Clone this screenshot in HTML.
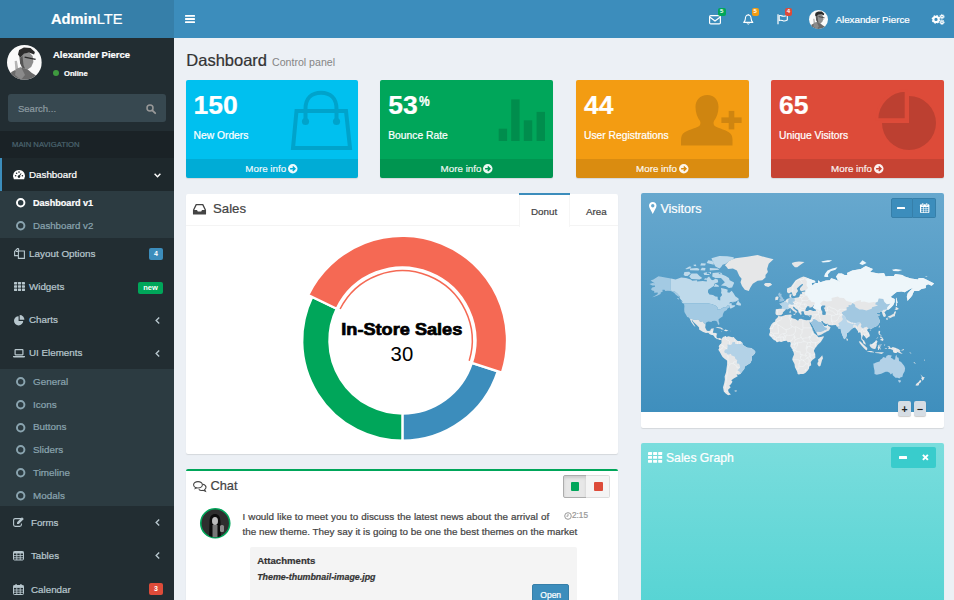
<!DOCTYPE html>
<html lang="en">
<head>
<meta charset="utf-8">
<title>AdminLTE | Dashboard</title>
<style>
*{box-sizing:border-box;margin:0;padding:0}
html,body{width:954px;height:600px;overflow:hidden}
body{font-family:"Liberation Sans",sans-serif;font-size:10.5px;color:#333;background:#ecf0f5;position:relative}
.abs{position:absolute}
.t{position:absolute;white-space:nowrap;line-height:1;-webkit-text-stroke:.22px currentColor}
svg{display:block;overflow:visible}
/* header */
#logo{left:0;top:0;width:173.5px;height:38px;background:#367fa9;color:#fff;text-align:center;font-size:14.7px;line-height:39.6px;-webkit-text-stroke:.2px #fff}
#logo b{font-weight:700}
#navbar{left:173.5px;top:0;width:780.5px;height:38px;background:#3c8dbc}
/* sidebar */
#sidebar{left:0;top:38px;width:173.5px;height:562px;background:#222d32}
.nav{position:absolute;left:0;width:173.5px;height:33.3px;color:#b8c7ce}

.sub{position:absolute;left:0;width:173.5px;background:#2c3b41}
.sub .t{left:33px;font-size:9.9px;color:#8aa4af}
.ring{position:absolute;left:15.8px;width:9.4px;height:9.4px}
.badge{position:absolute;border-radius:2px;color:#fff;font-weight:700;font-size:7px;text-align:center}
/* small boxes */
.sbox{position:absolute;top:80px;width:172px;height:98px;border-radius:2px;color:#fff;overflow:hidden;box-shadow:0 1px 1px rgba(0,0,0,.1)}
.sbox .num{left:8px;top:11.8px;font-size:26.5px;font-weight:700}
.sbox .lbl{left:8px;top:50.5px;font-size:10.3px}
.sbox .foot{-webkit-text-stroke:.22px currentColor;position:absolute;left:0;bottom:0;width:100%;height:19.5px;background:rgba(0,0,0,.1);text-align:center;font-size:9.8px;line-height:20px;color:rgba(255,255,255,.9)}
.zb{width:12.5px;height:14.5px;background:#d6dde4;color:#222;border-radius:2px;font-size:10.5px;line-height:17px;text-align:center;font-weight:700;box-shadow:0 1px 1px rgba(0,0,0,.2)}
.box{position:absolute;background:#fff;border-radius:2px;box-shadow:0 1px 1px rgba(0,0,0,.1)}
</style>
</head>
<body>

<!-- HEADER -->
<div id="logo" class="abs"><b>Admin</b>LTE</div>
<div id="navbar" class="abs">
  <!-- hamburger -->
  <svg class="abs" style="left:11.5px;top:15px" width="10" height="8" viewBox="0 0 10 8"><rect x="0" y="0" width="10" height="1.8" rx=".6" fill="#fff"/><rect x="0" y="3.1" width="10" height="1.8" rx=".6" fill="#fff"/><rect x="0" y="6.2" width="10" height="1.8" rx=".6" fill="#fff"/></svg>
  <!-- envelope -->
  <svg class="abs" style="left:535.5px;top:15px" width="12" height="9.5" viewBox="0 0 12 9.5"><rect x=".6" y=".6" width="10.8" height="8.3" rx="1.2" fill="none" stroke="#fff" stroke-width="1.2"/><path d="M1 2.2 L6 6 L11 2.2" fill="none" stroke="#fff" stroke-width="1.2"/></svg>
  <div class="badge" style="left:544.5px;top:8px;width:7.5px;height:7.5px;background:#00a65a;font-size:6px;line-height:7.5px">5</div>
  <!-- bell -->
  <svg class="abs" style="left:569.5px;top:13.5px" width="10.5" height="11" viewBox="0 0 10.5 11"><path d="M5.25 1 C3 1 2.4 3 2.4 4.6 C2.4 6.6 1.6 7.6 .7 8.4 L9.8 8.4 C8.9 7.6 8.1 6.6 8.1 4.6 C8.1 3 7.5 1 5.25 1 Z" fill="none" stroke="#fff" stroke-width="1.1" stroke-linejoin="round"/><path d="M4.2 9.4 A1.1 1.1 0 0 0 6.3 9.4" fill="none" stroke="#fff" stroke-width="1"/><rect x="4.8" y="0" width=".9" height="1.2" fill="#fff"/></svg>
  <div class="badge" style="left:578px;top:8px;width:7.5px;height:7.5px;background:#f39c12;font-size:6px;line-height:7.5px">5</div>
  <!-- flag -->
  <svg class="abs" style="left:603px;top:14px" width="11" height="10.5" viewBox="0 0 11 10.5"><path d="M1 .3 L1 10.3" stroke="#fff" stroke-width="1.2" fill="none"/><path d="M2.2 1.8 C4 .8 5.2 2.6 7 2.2 C8.4 1.9 9.4 1.4 10.3 1 L10.3 6 C9 6.8 7.8 7.2 6.6 7 C5 6.7 4 5.6 2.2 6.6 Z" fill="none" stroke="#fff" stroke-width="1.1" stroke-linejoin="round"/></svg>
  <div class="badge" style="left:611.5px;top:8px;width:7px;height:7.5px;background:#dd4b39;font-size:6px;line-height:7.5px">4</div>
  <!-- avatar -->
  <svg class="abs" style="left:635.7px;top:9.7px" width="19" height="19" viewBox="0 0 34.8 34.8"><defs><clipPath id="cA"><circle cx="17.4" cy="17.4" r="17.4"/></clipPath></defs><g clip-path="url(#cA)"><rect width="34.8" height="34.8" fill="#fafafa"/><path d="M4.4 27.1 L9.5 24.2 L16.1 22.2 L20.5 24.2 L24.9 27.9 L30.8 31.5 L30 34.8 L5 34.8 L3 31.5Z" fill="#6a6a6a"/><path d="M12.1 11.7 L16.9 8.4 L22 7.3 L25.7 11 L26.4 16.9 L24.2 22 L20.5 24.6 L16.1 23.2 L13.2 18.300Z" fill="#8e8e8e"/><path d="M13.2 13 L15.5 11 L16.5 20 L18 23.5 L15 22.5 L13 18Z" fill="#555"/><path d="M11 9.5 L12.1 5.1 L16.900 2.6 L23.5 2.9 L27.9 7 L27.1 9.5 L22 7.6 L16.900 8.8 L13.2 12.5Z" fill="#2b2b2b"/><path d="M17.6 12.1 L28.6 14.3" stroke="#2a2a2a" stroke-width="1.3" fill="none"/><path d="M7.7 16.100 L9.900 15.800 L11.4 24.2 L8.400 26Z" fill="#b5b5b5"/><path d="M9 24 L14 22 L18 30 L14 34.8 L8 30Z" fill="#8a8a8a"/></g></svg>
  <div class="t" style="left:662px;top:14.6px;font-size:9.75px;color:#fff">Alexander Pierce</div>
  <!-- gears -->
  <svg class="abs" style="left:758.5px;top:14px" width="12.5" height="10.5" viewBox="0 0 12.5 10.5"><circle cx="4" cy="5.4" r="2.6" fill="none" stroke="#fff" stroke-width="2"/><circle cx="4" cy="5.4" r="3.7" fill="none" stroke="#fff" stroke-width="1.3" stroke-dasharray="1.6 1.3"/><circle cx="10" cy="2.6" r="1.3" fill="none" stroke="#fff" stroke-width="1.3"/><circle cx="10" cy="2.6" r="2.2" fill="none" stroke="#fff" stroke-width=".9" stroke-dasharray="1 .73"/><circle cx="10" cy="8.2" r="1.3" fill="none" stroke="#fff" stroke-width="1.3"/><circle cx="10" cy="8.2" r="2.2" fill="none" stroke="#fff" stroke-width=".9" stroke-dasharray="1 .73"/></svg>
</div>

<!-- SIDEBAR -->
<div id="sidebar" class="abs">
<svg class="abs" style="left:7.3px;top:7.1px" width="34.8" height="34.8" viewBox="0 0 34.8 34.8"><defs><clipPath id="cB"><circle cx="17.4" cy="17.4" r="17.4"/></clipPath></defs><g clip-path="url(#cB)"><rect width="34.8" height="34.8" fill="#fafafa"/><path d="M4.4 27.1 L9.5 24.2 L16.1 22.2 L20.5 24.2 L24.9 27.9 L30.8 31.5 L30 34.8 L5 34.8 L3 31.5Z" fill="#6a6a6a"/><path d="M12.1 11.7 L16.9 8.4 L22 7.3 L25.7 11 L26.4 16.9 L24.2 22 L20.5 24.6 L16.1 23.2 L13.2 18.300Z" fill="#8e8e8e"/><path d="M13.2 13 L15.5 11 L16.5 20 L18 23.5 L15 22.5 L13 18Z" fill="#555"/><path d="M11 9.5 L12.1 5.1 L16.900 2.6 L23.5 2.9 L27.9 7 L27.1 9.5 L22 7.6 L16.900 8.8 L13.2 12.5Z" fill="#2b2b2b"/><path d="M17.6 12.1 L28.6 14.3" stroke="#2a2a2a" stroke-width="1.3" fill="none"/><path d="M7.7 16.100 L9.900 15.800 L11.4 24.2 L8.400 26Z" fill="#b5b5b5"/><path d="M9 24 L14 22 L18 30 L14 34.8 L8 30Z" fill="#8a8a8a"/></g></svg>
<div class="t" style="left:53px;top:11.8px;font-size:9.5px;font-weight:700;color:#fff">Alexander Pierce</div>
<div class="abs" style="left:53px;top:32px;width:6.4px;height:6.4px;border-radius:50%;background:#3f9a3f"></div>
<div class="t" style="left:64px;top:31.5px;font-size:7.6px;color:#fff;font-weight:700">Online</div>
<div class="abs" style="left:8px;top:56px;width:158px;height:28px;background:#374850;border-radius:3px"></div>
<div class="t" style="left:18px;top:65.5px;font-size:9.5px;color:#8d9ba1">Search...</div>
<svg class="abs" style="left:145.5px;top:66px" width="10" height="10" viewBox="0 0 10 10"><circle cx="4" cy="4" r="3" fill="none" stroke="#999" stroke-width="1.5"/><path d="M6.3 6.3 L9.2 9.2" stroke="#999" stroke-width="1.8" stroke-linecap="round"/></svg>
<div class="abs" style="left:0;top:93px;width:173.5px;height:27px;background:#1a2226"></div>
<div class="t" style="left:12px;top:102.5px;font-size:7.7px;color:#4b646f">MAIN NAVIGATION</div>
<div class="abs" style="left:0;top:120px;width:173.5px;height:32.5px;background:#1e282c"></div><div class="abs" style="left:0;top:120px;width:2.4px;height:32.5px;background:#3c8dbc"></div>
<svg class="abs" style="left:13px;top:131.5px" width="12" height="9.5" viewBox="0 0 12 9.5"><path d="M6 0 A6 6 0 0 0 .9 9.2 L11.1 9.2 A6 6 0 0 0 6 0Z" fill="#fff"/><circle cx="6" cy="6.6" r="1.3" fill="#1e282c"/><path d="M6 6.6 L8 3.4" stroke="#1e282c" stroke-width="1"/><circle cx="2.6" cy="5.8" r=".8" fill="#1e282c"/><circle cx="3.6" cy="3.2" r=".8" fill="#1e282c"/><circle cx="6" cy="2.1" r=".8" fill="#1e282c"/><circle cx="9.4" cy="5.8" r=".8" fill="#1e282c"/></svg>
<div class="t" style="left:29px;top:131.5px;font-size:9.8px;color:#fff">Dashboard</div>
<svg class="abs" style="left:153.5px;top:134.5px" width="7" height="5" viewBox="0 0 7 5"><path d="M.6 .8 L3.5 3.8 L6.4 .8" fill="none" stroke="#fff" stroke-width="1.4"/></svg>
<div class="sub" style="top:152.5px;height:47px">
<svg class="ring" style="top:7.8px" viewBox="0 0 10 10"><circle cx="5" cy="5" r="3.95" fill="none" stroke="#fff" stroke-width="2.1"/></svg><div class="t" style="top:8.4px;color:#fff;font-weight:700;font-size:9.1px">Dashboard v1</div>
<svg class="ring" style="top:30.3px" viewBox="0 0 10 10"><circle cx="5" cy="5" r="3.95" fill="none" stroke="#8aa4af" stroke-width="2.1"/></svg><div class="t" style="top:30.4px;font-size:9.7px">Dashboard v2</div>
</div>
<svg class="abs" style="left:13.5px;top:209.5px" width="11" height="11" viewBox="0 0 11 11"><path d="M4.6 .6 L4.6 3.4 L1.8 3.4 M4.6 .6 L3.4 .6 L.6 3.4 L.6 7.6 L4 7.6" fill="none" stroke="#b8c7ce" stroke-width="1.1"/><path d="M4.4 3 L10.4 3 L10.4 10.4 L4.4 10.4Z" fill="none" stroke="#b8c7ce" stroke-width="1.1"/></svg><div class="t" style="left:29px;top:210.8px;font-size:9.9px;color:#b8c7ce">Layout Options</div><div class="badge" style="left:149px;top:210px;width:14px;height:12px;background:#3c8dbc;line-height:12px;font-size:7px">4</div>
<svg class="abs" style="left:13.5px;top:244px" width="11" height="9" viewBox="0 0 11 9"><g fill="#b8c7ce"><rect x="0" y="0" width="3.1" height="2.4" rx=".4"/><rect x="3.95" y="0" width="3.1" height="2.4" rx=".4"/><rect x="7.9" y="0" width="3.1" height="2.4" rx=".4"/><rect x="0" y="3.3" width="3.1" height="2.4" rx=".4"/><rect x="3.95" y="3.3" width="3.1" height="2.4" rx=".4"/><rect x="7.9" y="3.3" width="3.1" height="2.4" rx=".4"/><rect x="0" y="6.6" width="3.1" height="2.4" rx=".4"/><rect x="3.95" y="6.6" width="3.1" height="2.4" rx=".4"/><rect x="7.9" y="6.6" width="3.1" height="2.4" rx=".4"/></g></svg><div class="t" style="left:29px;top:243.8px;font-size:9.8px;color:#b8c7ce">Widgets</div><div class="badge" style="left:138px;top:243.5px;width:25px;height:12px;background:#00a65a;line-height:11px;font-size:7.5px">new</div>
<svg class="abs" style="left:13.5px;top:276.5px" width="11" height="10.5" viewBox="0 0 11 10.5"><path d="M4.6 1.2 A4.6 4.6 0 1 0 9.2 5.9 L4.6 5.9Z" fill="#b8c7ce"/><path d="M5.7 0 A4.7 4.7 0 0 1 10.4 4.7 L5.7 4.7Z" fill="#b8c7ce"/></svg><div class="t" style="left:29px;top:276.9px;font-size:9.8px;color:#b8c7ce">Charts</div><svg class="abs" style="left:154.5px;top:278.5px" width="5" height="7" viewBox="0 0 5 7"><path d="M4.2 .6 L1.2 3.5 L4.2 6.4" fill="none" stroke="#b8c7ce" stroke-width="1.4"/></svg>
<svg class="abs" style="left:13px;top:311px" width="12" height="8.5" viewBox="0 0 12 8.5"><rect x="2.1" y=".6" width="7.8" height="5.2" rx=".5" fill="none" stroke="#b8c7ce" stroke-width="1.2"/><path d="M0 7 L12 7 L12 7.4 Q12 8.4 11 8.4 L1 8.4 Q0 8.4 0 7.4Z" fill="#b8c7ce"/></svg><div class="t" style="left:29px;top:310.3px;font-size:9.8px;color:#b8c7ce">UI Elements</div><svg class="abs" style="left:154.5px;top:311.5px" width="5" height="7" viewBox="0 0 5 7"><path d="M4.2 .6 L1.2 3.5 L4.2 6.4" fill="none" stroke="#b8c7ce" stroke-width="1.4"/></svg>
<div class="sub" style="top:331px;height:137px">
<svg class="ring" style="top:8.1px" viewBox="0 0 10 10"><circle cx="5" cy="5" r="3.95" fill="none" stroke="#8aa4af" stroke-width="2.1"/></svg><div class="t" style="top:8.0px">General</div>
<svg class="ring" style="top:30.8px" viewBox="0 0 10 10"><circle cx="5" cy="5" r="3.95" fill="none" stroke="#8aa4af" stroke-width="2.1"/></svg><div class="t" style="top:30.7px">Icons</div>
<svg class="ring" style="top:53.5px" viewBox="0 0 10 10"><circle cx="5" cy="5" r="3.95" fill="none" stroke="#8aa4af" stroke-width="2.1"/></svg><div class="t" style="top:53.4px">Buttons</div>
<svg class="ring" style="top:76.2px" viewBox="0 0 10 10"><circle cx="5" cy="5" r="3.95" fill="none" stroke="#8aa4af" stroke-width="2.1"/></svg><div class="t" style="top:76.1px">Sliders</div>
<svg class="ring" style="top:98.9px" viewBox="0 0 10 10"><circle cx="5" cy="5" r="3.95" fill="none" stroke="#8aa4af" stroke-width="2.1"/></svg><div class="t" style="top:98.8px">Timeline</div>
<svg class="ring" style="top:121.6px" viewBox="0 0 10 10"><circle cx="5" cy="5" r="3.95" fill="none" stroke="#8aa4af" stroke-width="2.1"/></svg><div class="t" style="top:121.5px">Modals</div>
</div>
<svg class="abs" style="left:12.7px;top:479px" width="11.5" height="10" viewBox="0 0 11.5 10"><path d="M8 1.6 L2.2 1.6 Q.6 1.6 .6 3.2 L.6 7.8 Q.6 9.4 2.2 9.4 L6.8 9.4 Q8.4 9.4 8.4 7.8 L8.4 6.4" fill="none" stroke="#b8c7ce" stroke-width="1.1"/><path d="M4 7 L4 5.2 L9 .2 L10.8 2 L5.8 7Z" fill="#b8c7ce"/></svg><div class="t" style="left:31px;top:479.8px;font-size:9.7px;color:#b8c7ce">Forms</div><svg class="abs" style="left:154.5px;top:480.5px" width="5" height="7" viewBox="0 0 5 7"><path d="M4.2 .6 L1.2 3.5 L4.2 6.4" fill="none" stroke="#b8c7ce" stroke-width="1.4"/></svg>
<svg class="abs" style="left:12.7px;top:512.5px" width="11" height="9.5" viewBox="0 0 11 9.5"><rect x=".5" y=".5" width="10" height="8.5" rx="1" fill="none" stroke="#b8c7ce" stroke-width="1"/><rect x=".5" y=".5" width="10" height="2" fill="#b8c7ce"/><path d="M.5 4.6 H10.5 M.5 6.8 H10.5 M3.8 2 V9 M7.2 2 V9" stroke="#b8c7ce" stroke-width=".9" fill="none"/></svg><div class="t" style="left:31px;top:513.0px;font-size:9.7px;color:#b8c7ce">Tables</div><svg class="abs" style="left:154.5px;top:513.5px" width="5" height="7" viewBox="0 0 5 7"><path d="M4.2 .6 L1.2 3.5 L4.2 6.4" fill="none" stroke="#b8c7ce" stroke-width="1.4"/></svg>
<svg class="abs" style="left:12.7px;top:545.5px" width="11" height="11" viewBox="0 0 11 11"><rect x=".5" y="1.5" width="10" height="9" rx=".8" fill="none" stroke="#b8c7ce" stroke-width="1"/><rect x=".5" y="1.5" width="10" height="2.4" fill="#b8c7ce"/><path d="M.5 6 H10.5 M.5 8.2 H10.5 M3.8 3.8 V10.5 M7.2 3.8 V10.5" stroke="#b8c7ce" stroke-width=".9" fill="none"/><rect x="2.4" y="0" width="1.4" height="2.6" rx=".6" fill="#b8c7ce"/><rect x="7.2" y="0" width="1.4" height="2.6" rx=".6" fill="#b8c7ce"/></svg><div class="t" style="left:31px;top:546.6px;font-size:9.8px;color:#b8c7ce">Calendar</div><div class="badge" style="left:149px;top:545px;width:14px;height:12px;background:#dd4b39;line-height:12px;font-size:7px">3</div>
</div>

<!-- CONTENT -->
<div id="content">
<div class="t" style="left:186.3px;top:52.3px;font-size:16.5px;color:#333">Dashboard</div>
<div class="t" style="left:272px;top:57.4px;font-size:10.6px;color:#858585;-webkit-text-stroke:0">Control panel</div>
<div class="sbox" style="left:185.5px;width:172px;background:#00c0ef"><div class="t num">150</div><div class="t lbl">New Orders</div>
<svg class="abs" style="left:105px;top:11px" width="61" height="59" viewBox="0 0 61 59"><path d="M5.5 20 L55 20 L59 57 L2 57 Z" fill="none" stroke="#00a3cb" stroke-width="4" stroke-linejoin="miter"/><path d="M14.5 30 L14.5 18 C14.5 7 21 1.8 30 1.8 C39 1.8 45.500 7 45.500 18 L45.500 30" fill="none" stroke="#00a3cb" stroke-width="4"/><circle cx="14.5" cy="30.500" r="3.6" fill="#00a3cb"/><circle cx="45.5" cy="30.500" r="3.6" fill="#00a3cb"/></svg>
<div class="foot">More info<svg style="display:inline-block;vertical-align:-1.5px;margin-left:2px" width="9.5" height="9.5" viewBox="0 0 10 10"><circle cx="5" cy="5" r="5" fill="#fff" fill-opacity=".92"/><path d="M2.2 5 H7 M5 2.6 L7.4 5 L5 7.4" fill="none" stroke="#00acd7" stroke-width="1.5"/></svg></div></div>
<div class="sbox" style="left:380.2px;width:173.2px;background:#00a65a"><div class="t num">53<span style="font-size:15.4px;position:relative;top:-7.6px;left:1.8px;display:inline-block;transform:scaleX(.78);transform-origin:0 50%">%</span></div><div class="t lbl">Bounce Rate</div>
<svg class="abs" style="left:0;top:0" width="173" height="98"><g fill="#008d4d"><rect x="118.7" y="48.7" width="8.4" height="12.3"/><rect x="131.2" y="19.4" width="8.4" height="41.6"/><rect x="143.800" y="40.3" width="8.4" height="20.7"/><rect x="156.600" y="31.9" width="8.4" height="29.1"/></g></svg>
<div class="foot">More info<svg style="display:inline-block;vertical-align:-1.5px;margin-left:2px" width="9.5" height="9.5" viewBox="0 0 10 10"><circle cx="5" cy="5" r="5" fill="#fff" fill-opacity=".92"/><path d="M2.2 5 H7 M5 2.6 L7.4 5 L5 7.4" fill="none" stroke="#009551" stroke-width="1.5"/></svg></div></div>
<div class="sbox" style="left:576px;width:172.5px;background:#f39c12"><div class="t num">44</div><div class="t lbl">User Registrations</div>
<svg class="abs" style="left:0;top:0" width="173" height="98"><g fill="#cf8510"><path d="M131.3 15 C138.5 15 142.5 20 142.5 27 C142.5 33 140.500 37.500 138 41 C137 43 137.5 45.500 140 46.800 C146 49.500 153 51 155.500 55 C156.800 57.500 156.500 61 156.500 65.500 L105 65.500 C105 61 104.800 57.500 106 55 C108.500 51 116 49.500 122 46.800 C124.500 45.500 125 43 124 41 C121.500 37.500 119.500 33 119.500 27 C119.500 20 124 15 131.300 15Z"/><rect x="145.4" y="37.4" width="20.200" height="5.600"/><rect x="152.700" y="30.900" width="5.600" height="18.500"/></g></svg>
<div class="foot">More info<svg style="display:inline-block;vertical-align:-1.5px;margin-left:2px" width="9.5" height="9.5" viewBox="0 0 10 10"><circle cx="5" cy="5" r="5" fill="#fff" fill-opacity=".92"/><path d="M2.2 5 H7 M5 2.6 L7.4 5 L5 7.4" fill="none" stroke="#da8c10" stroke-width="1.5"/></svg></div></div>
<div class="sbox" style="left:771px;width:172.5px;background:#dd4b39"><div class="t num">65</div><div class="t lbl">Unique Visitors</div>
<svg class="abs" style="left:0;top:0" width="173" height="98"><g fill="#bc4031"><path d="M138 16 A27 27 0 1 1 111 43 L138 43Z"/><path d="M135 10.500 L135 39.500 L106 39.500 A29 29 0 0 1 135 10.500Z" stroke="#dd4b39" stroke-width="2.6"/></g></svg>
<div class="foot">More info<svg style="display:inline-block;vertical-align:-1.5px;margin-left:2px" width="9.5" height="9.5" viewBox="0 0 10 10"><circle cx="5" cy="5" r="5" fill="#fff" fill-opacity=".92"/><path d="M2.2 5 H7 M5 2.6 L7.4 5 L5 7.4" fill="none" stroke="#c64333" stroke-width="1.5"/></svg></div></div>
<div class="box" style="left:185.5px;top:193.5px;width:432.5px;height:260px">
<div class="abs" style="left:0;top:0;width:100%;height:32px;border-bottom:1px solid #f4f4f4"></div>
<svg class="abs" style="left:7.5px;top:10px" width="13" height="10.5" viewBox="0 0 13 10.5"><path d="M3.2 .6 L9.8 .6 L12.4 6 L12.4 9.9 L.6 9.9 L.6 6 Z" fill="none" stroke="#444" stroke-width="1.3" stroke-linejoin="round"/><path d="M.6 6 L4 6 L4.8 7.6 L8.2 7.6 L9 6 L12.4 6 L12.4 9.9 L.6 9.9Z" fill="#444"/></svg>
<div class="t" style="left:27.5px;top:8.5px;font-size:13.2px;color:#444">Sales</div>
<div class="abs" style="left:333px;top:-.7px;width:51.500px;height:33.7px;background:#fff;border-left:1px solid #f6f6f6;border-right:1px solid #f6f6f6"></div><div class="abs" style="left:333px;top:-.9px;width:51.5px;height:2.7px;background:#3c8dbc"></div>
<div class="t" style="left:345.5px;top:13.5px;font-size:9.8px;color:#444">Donut</div>
<div class="t" style="left:400.5px;top:13.5px;font-size:9.8px;color:#444">Area</div>
<svg class="abs" style="left:0;top:0" width="432" height="260"><path d="M311.75 177.30 A100.2 100.2 0 0 1 216.40 246.70 L216.40 219.50 A73 73 0 0 0 285.87 168.94Z" fill="#3c8dbc" stroke="#fff" stroke-width="2.3"/><path d="M216.40 246.70 A100.2 100.2 0 0 1 126.19 102.89 L150.68 114.73 A73 73 0 0 0 216.40 219.50Z" fill="#00a65a" stroke="#fff" stroke-width="2.3"/><path d="M122.23 100.97 A104.6 104.6 0 0 1 315.94 178.65 L285.87 168.94 A73 73 0 0 0 150.68 114.73Z" fill="#f56954" stroke="#fff" stroke-width="2.3"/><path d="M154.10 115.03 A69.8 69.8 0 0 1 283.19 166.79" fill="none" stroke="#f56954" stroke-width="1.5"/><text x="215.8" y="141.1" text-anchor="middle" font-family="Liberation Sans, sans-serif" font-weight="700" font-size="16.4" fill="#000" stroke="#000" stroke-width=".7" textLength="121" lengthAdjust="spacingAndGlyphs">In-Store Sales</text><text x="215.9" y="166.7" text-anchor="middle" font-family="Liberation Sans, sans-serif" font-size="20.3" fill="#000">30</text></svg>
</div>
<div class="box" style="left:185.5px;top:470.9px;width:432.5px;height:140px;border-radius:0"><div class="abs" style="left:0;top:-2.4px;width:432.5px;height:2.5px;background:#00a65a;border-radius:2px 2px 0 0"></div>
<svg class="abs" style="left:7.5px;top:10px" width="13.5" height="10.500" viewBox="0 0 13.5 10.5"><ellipse cx="5" cy="3.8" rx="4.4" ry="3.2" fill="none" stroke="#444" stroke-width="1.1"/><path d="M2.2 6.2 L1.2 8.4 L4.4 6.9Z" fill="#444"/><path d="M10 3.2 C12 3.8 13 5 13 6.2 C13 7.2 12.400 8 11.600 8.600 L12.400 10.300 L10 9.300 C8.500 9.700 6.800 9.400 5.800 8.300" fill="none" stroke="#444" stroke-width="1.1"/></svg>
<div class="t" style="left:25px;top:9.6px;font-size:12.8px;color:#444">Chat</div>
<div class="abs" style="left:377px;top:4.500px;width:24px;height:22.6px;background:#e7e7e7;border:1px solid #adadad;border-radius:2px 0 0 2px;box-shadow:inset 0 2px 3px rgba(0,0,0,.12)"></div>
<div class="abs" style="left:400.5px;top:4.500px;width:24px;height:22.6px;background:#f4f4f4;border:1px solid #ddd;border-left:0;border-radius:0 2px 2px 0"></div>
<div class="abs" style="left:385px;top:11.500px;width:8.5px;height:8.500px;background:#00a65a;border-radius:1px"></div>
<div class="abs" style="left:408.800px;top:11.500px;width:8.5px;height:8.500px;background:#dd4b39;border-radius:1px"></div>
<svg class="abs" style="left:14.5px;top:37.5px" width="30.5" height="30.500" viewBox="0 0 30.5 30.5"><defs><clipPath id="cC"><circle cx="15.25" cy="15.25" r="14"/></clipPath></defs><circle cx="15.25" cy="15.25" r="14.500" fill="#2e2e2e" stroke="#00a65a" stroke-width="1.600"/><g clip-path="url(#cC)"><path d="M9 30 L9.500 14 C9.500 8 12 6 15 6 C18 6 20.500 8 20.500 14 L21 30Z" fill="#0d0d0d"/><ellipse cx="15" cy="13" rx="3" ry="4" fill="#bdbdbd"/><path d="M11.500 11 C12 8 18 8 18.500 11 L18.500 9.500 C17 7 13 7 11.500 9.500Z" fill="#111"/><rect x="20" y="17" width="4" height="7" rx="1.500" fill="#8a8a8a"/><rect x="12.500" y="17" width="5" height="14" fill="#777"/></g></svg>
<div class="t msg" style="left:57px;top:41.6px;word-spacing:.26px;font-size:9.9px;color:#444">I would like to meet you to discuss the latest news about the arrival of</div>
<div class="t msg" style="left:57px;top:56.6px;font-size:9.9px;color:#444">the new theme. They say it is going to be one the best themes on the market</div>
<svg class="abs" style="left:378.700px;top:41.4px" width="8" height="8" viewBox="0 0 8 8"><circle cx="4" cy="4" r="3.300" fill="none" stroke="#999" stroke-width="1"/><path d="M4 2 V4.200 H2.400" fill="none" stroke="#999" stroke-width=".9"/></svg>
<div class="t" style="left:386.500px;top:41.6px;font-size:8.2px;color:#999">2:15</div>
<div class="abs" style="left:64.500px;top:76.6px;width:326.500px;height:70px;background:#f4f4f4;border-radius:2px"></div>
<div class="t" style="left:71.700px;top:85.6px;font-size:9.6px;font-weight:700;color:#333">Attachments</div>
<div class="t" style="left:71.700px;top:102px;font-size:8.9px;font-style:italic;font-weight:700;color:#333">Theme-thumbnail-image.jpg</div>
<div class="abs" style="left:346.500px;top:113px;width:37.200px;height:30px;background:#3c8dbc;border:1px solid #367fa9;border-radius:2px"></div>
<div class="t" style="left:354.800px;top:120.500px;font-size:8.5px;color:#fff">Open</div>
</div>
<div class="box" style="left:641.4px;top:193.4px;width:302.4px;height:234.400px;background:#fff;overflow:hidden">
<div class="abs" style="left:0;top:0;width:303px;height:219px;background:linear-gradient(#67a8ce,#3c8dbc);background-size:100% 234.4px"></div>
<svg class="abs" style="left:7.800px;top:8.600px" width="7.500" height="12" viewBox="0 0 7.5 12"><path d="M3.750 0 C1.600 0 0 1.600 0 3.700 C0 5.600 1.800 8 3.750 12 C5.700 8 7.500 5.600 7.500 3.700 C7.500 1.600 5.900 0 3.750 0Z M3.750 2 A1.700 1.700 0 1 1 3.750 5.400 A1.700 1.700 0 1 1 3.750 2Z" fill="#fff" fill-rule="evenodd"/></svg>
<div class="t" style="left:19px;top:9.2px;font-size:12.6px;color:#fff">Visitors</div>
<div class="abs" style="left:249.300px;top:4.300px;width:22.500px;height:20.800px;background:#3c8dbc;border:1px solid #367fa9;border-radius:2px 0 0 2px"></div>
<div class="abs" style="left:271.800px;top:4.300px;width:22.800px;height:20.800px;background:#3c8dbc;border:1px solid #367fa9;border-left:0;border-radius:0 2px 2px 0"></div>
<div class="abs" style="left:256px;top:13.200px;width:7.700px;height:2.200px;background:#fff;border-radius:.5px"></div>
<svg class="abs" style="left:278.500px;top:9.400px" width="9.400" height="10" viewBox="0 0 9.400 10"><rect x="0" y="1.200" width="9.400" height="8.800" rx="1" fill="#fff"/><g fill="#3c8dbc"><rect x="1.100" y="4" width="2" height="1.500"/><rect x="3.700" y="4" width="2" height="1.500"/><rect x="6.300" y="4" width="2" height="1.500"/><rect x="1.100" y="6.100" width="2" height="1.500"/><rect x="3.700" y="6.100" width="2" height="1.500"/><rect x="6.300" y="6.100" width="2" height="1.500"/><rect x="1.100" y="8.100" width="2" height="1.200"/><rect x="3.700" y="8.100" width="2" height="1.200"/><rect x="6.300" y="8.100" width="2" height="1.200"/></g><rect x="2" y="0" width="1.400" height="2.600" rx=".6" fill="#fff" stroke="#3c8dbc" stroke-width=".4"/><rect x="6" y="0" width="1.400" height="2.600" rx=".6" fill="#fff" stroke="#3c8dbc" stroke-width=".4"/></svg>
<!--MAPSTART--><svg class="abs" style="left:0;top:0" width="302" height="219" viewBox="0 0 302 219">
<path d="M29.9 85.6 L24.3 84.5 L17.5 83.2 L12.4 86.5 L9.6 87.4 L12.0 89.2 L14.0 90.3 L11.6 89.9 L8.4 91.1 L11.2 92.5 L14.0 92.5 L14.0 93.8 L11.2 94.4 L10.0 96.2 L11.2 97.4 L13.2 98.0 L13.2 99.7 L16.7 99.6 L16.7 101.0 L14.0 102.7 L11.2 104.2 L13.2 103.8 L16.0 102.7 L19.5 101.0 L19.9 99.2 L21.5 98.9 L21.5 96.8 L23.5 96.8 L24.3 98.0 L26.7 97.7 L29.9 98.0 L33.1 99.8 L34.6 101.5 L37.4 103.8 L38.6 103.2 L36.2 100.4 L33.8 98.6 L31.5 98.0 L29.9 97.7Z" fill="#a3cae3" fill-rule="evenodd"/>
<path d="M29.9 85.6 L29.9 97.7 L31.5 98.0 L33.8 98.6 L36.2 100.4 L38.6 103.2 L38.6 104.9 L40.2 107.0 L43.4 110.2 L44.2 110.2 L66.5 110.2 L71.2 111.2 L74.8 112.7 L76.4 114.2 L76.4 116.6 L79.2 116.2 L81.2 115.2 L82.4 114.2 L85.1 114.2 L87.1 111.9 L88.1 112.2 L88.7 114.2 L89.5 115.7 L93.5 113.7 L94.3 112.2 L90.7 112.2 L90.7 110.2 L87.9 110.2 L89.5 108.9 L94.3 108.8 L96.7 107.6 L97.7 107.0 L97.5 105.4 L94.3 103.2 L92.7 100.4 L90.7 97.7 L88.3 99.8 L86.3 99.2 L86.7 96.8 L84.7 96.0 L80.0 95.1 L80.4 98.0 L80.0 99.8 L81.2 102.1 L79.2 104.3 L79.2 107.6 L76.8 106.5 L76.6 103.8 L74.4 103.5 L72.0 102.1 L68.4 101.5 L66.9 99.2 L67.2 96.8 L70.4 94.4 L72.8 93.1 L73.6 90.5 L77.2 89.2 L76.8 86.5 L74.4 85.8 L72.0 87.2 L70.4 86.7 L68.0 83.6 L66.1 85.0 L65.7 88.5 L61.7 88.1 L56.1 88.5 L56.1 87.2 L51.3 87.8 L49.8 86.5 L45.0 85.0 L40.2 84.6 L34.6 86.5Z" fill="#bfdaeb" fill-rule="evenodd"/>
<path d="M95.1 111.5 L97.9 112.4 L99.9 112.5 L100.1 111.7 L99.5 110.2 L97.9 109.1 L97.7 107.6 L96.7 108.1 L95.9 109.7 L94.8 111.2Z M93.1 89.9 L91.1 94.4 L87.9 95.0 L84.7 93.1 L80.0 92.5 L83.9 89.2 L80.0 85.0 L74.4 85.0 L71.2 83.6 L71.6 79.9 L77.6 79.6 L80.0 80.9 L84.7 82.9 L87.9 85.0 L88.7 87.2 L92.7 89.2Z M58.5 86.5 L50.5 86.0 L48.2 83.6 L50.5 80.6 L56.1 80.6 L58.5 82.9 L61.3 85.0Z M44.2 82.9 L42.6 82.1 L43.4 79.1 L48.2 78.8 L49.8 80.6 L46.6 82.9Z M92.7 64.3 L86.3 63.3 L78.4 63.1 L70.4 65.3 L72.0 69.0 L74.4 73.4 L78.4 75.4 L80.0 74.2 L81.6 71.7 L84.7 70.8 L87.9 68.1 L92.7 66.2Z M78.4 76.7 L68.8 77.5 L68.8 75.1 L76.8 75.6Z M72.8 71.7 L65.7 69.9 L67.2 67.2 L72.0 68.1Z M57.7 77.5 L49.0 77.2 L49.0 75.4 L56.1 75.1 L58.5 75.9Z M68.0 82.1 L63.3 82.1 L62.5 79.9 L66.5 79.1 L69.6 79.9Z M78.0 93.8 L72.8 93.8 L74.4 90.8 L77.6 92.5Z M42.6 108.6 L40.2 108.4 L41.8 110.2 L43.8 110.8Z M44.2 75.9 L48.2 73.4 L50.5 73.7 L49.0 75.6 L45.8 76.2Z M59.3 77.2 L64.1 77.5 L64.5 75.1 L60.9 74.7Z M59.3 72.5 L64.1 72.5 L64.9 70.5 L60.1 70.3Z M65.7 80.9 L70.0 81.1 L70.0 79.1 L66.1 78.9Z M62.9 86.5 L65.7 87.0 L66.1 85.6 L64.1 85.2Z M77.6 80.9 L80.8 81.2 L80.8 79.9 L78.4 79.4Z M52.9 72.9 L55.3 73.2 L54.9 71.5 L52.5 71.7Z M90.7 109.3 L92.9 109.8 L92.9 110.1 L90.9 109.7Z M36.2 104.9 L37.4 104.9 L37.8 106.7 L36.8 106.0Z" fill="#bfdaeb" fill-rule="evenodd"/>
<path d="M43.0 110.8 L44.2 110.2 L66.5 110.2 L71.2 111.2 L74.8 112.7 L76.4 114.2 L76.4 116.6 L79.2 116.2 L81.2 115.2 L82.4 114.2 L85.1 114.2 L87.1 111.9 L88.1 112.2 L88.7 114.2 L86.3 115.7 L85.9 117.1 L83.2 118.5 L82.0 120.9 L81.6 123.6 L80.0 124.5 L77.6 126.3 L77.6 128.1 L78.4 130.7 L78.0 132.2 L76.8 131.1 L76.2 128.9 L75.2 128.1 L73.6 127.8 L71.2 127.9 L70.4 128.9 L67.2 128.5 L64.9 129.8 L64.6 131.5 L62.9 130.2 L61.7 128.3 L60.1 128.9 L58.9 128.4 L57.3 126.5 L53.7 126.9 L50.7 125.9 L48.9 125.9 L47.8 124.5 L46.2 124.1 L45.0 121.8 L43.4 119.0 L43.2 116.2 L43.4 113.2Z" fill="#a3cae3" fill-rule="evenodd"/>
<path d="M48.9 125.9 L50.7 125.9 L53.7 126.9 L57.3 126.5 L58.9 128.4 L60.1 128.9 L61.7 128.3 L62.9 130.2 L64.6 131.5 L64.2 134.5 L65.7 137.4 L66.9 138.0 L69.2 137.8 L70.0 135.7 L72.8 135.3 L72.4 137.4 L71.8 139.8 L75.2 140.0 L75.8 140.7 L75.4 143.9 L76.4 145.5 L78.8 145.1 L80.5 145.9 L80.4 147.0 L78.4 146.9 L77.2 146.3 L76.0 146.1 L74.0 144.7 L72.4 142.3 L69.2 141.5 L67.2 139.8 L64.9 140.0 L61.7 138.8 L58.1 136.6 L58.1 134.5 L55.7 132.1 L52.5 128.9 L50.9 126.7 L50.9 128.1 L52.9 131.1 L54.5 134.0 L52.9 132.8 L50.5 129.4Z" fill="#e6e7e8" fill-rule="evenodd"/>
<path d="M74.4 134.9 L76.8 133.9 L80.0 134.6 L82.9 136.4 L80.4 136.6 L80.0 135.7 L76.8 134.9Z M82.8 137.8 L84.3 136.6 L87.5 137.6 L85.5 138.2Z M88.6 137.8 L89.8 137.9 L89.5 138.3Z M79.7 137.9 L81.3 138.0 L80.8 138.4Z" fill="#e6e7e8" fill-rule="evenodd"/>
<path d="M83.9 72.2 L87.9 68.1 L94.3 65.3 L106.2 63.7 L116.6 62.1 L124.5 64.3 L132.5 66.2 L127.7 70.8 L126.1 75.9 L126.9 79.1 L124.5 82.1 L124.5 84.6 L121.3 87.2 L116.6 87.8 L111.8 90.8 L109.4 94.4 L107.8 98.0 L103.8 96.8 L101.0 93.1 L99.5 89.2 L100.6 85.8 L98.3 82.9 L95.9 77.5 L91.9 75.6 L87.1 75.9 L85.5 73.7Z" fill="#e6e7e8" fill-rule="evenodd"/>
<path d="M122.9 91.2 L124.5 90.0 L129.3 89.9 L131.2 91.8 L127.3 93.9 L124.1 93.1Z" fill="#e6e7e8" fill-rule="evenodd"/>
<path d="M80.5 145.9 L82.0 144.1 L84.7 142.9 L85.3 143.9 L87.5 143.3 L91.1 144.2 L92.7 144.1 L94.3 145.9 L96.7 147.9 L99.1 148.1 L101.0 149.3 L102.2 151.9 L103.8 153.3 L106.6 154.7 L110.2 154.9 L112.6 156.7 L114.2 158.3 L114.2 159.9 L112.6 161.9 L111.0 163.1 L111.0 166.4 L109.4 170.1 L107.0 171.4 L103.8 173.5 L103.3 176.1 L101.4 178.2 L99.5 180.9 L97.1 181.8 L95.5 180.9 L96.7 183.2 L92.7 185.5 L90.3 187.3 L91.5 188.8 L89.9 191.2 L88.3 192.7 L89.7 194.2 L87.1 196.8 L87.5 198.9 L89.9 201.6 L87.1 202.2 L84.7 200.5 L82.8 198.4 L82.0 194.2 L83.2 190.2 L83.9 186.4 L83.6 183.6 L85.1 179.1 L85.5 175.6 L86.1 171.4 L86.1 167.6 L83.9 166.0 L81.6 163.9 L80.4 161.9 L78.8 159.1 L77.3 156.7 L78.4 155.1 L77.7 153.5 L78.4 151.9 L80.0 150.7 L80.5 149.5 L80.4 147.0Z" fill="#e6e7e8" fill-rule="evenodd"/>
<path d="M101.0 149.3 L102.2 151.9 L103.8 153.3 L106.6 154.7 L110.2 154.9 L112.6 156.7 L114.2 158.3 L114.2 159.9 L112.6 161.9 L111.0 163.1 L111.0 166.4 L109.4 170.1 L107.0 171.4 L103.8 173.5 L103.3 176.1 L101.4 178.2 L99.5 180.6 L98.3 178.2 L96.3 177.5 L99.1 174.8 L98.7 173.5 L98.8 172.2 L97.9 170.8 L95.9 170.5 L95.9 168.7 L96.3 167.2 L94.3 165.8 L93.9 163.8 L90.3 162.3 L90.1 160.7 L87.9 161.5 L85.9 161.5 L85.9 160.3 L83.9 160.1 L83.2 158.7 L83.9 156.7 L86.3 156.1 L86.7 153.5 L86.3 151.5 L88.7 151.8 L89.5 152.1 L91.1 151.1 L91.1 149.5 L93.9 148.7 L94.3 151.1 L96.7 151.1 L98.7 150.9 L100.3 150.9Z" fill="#b3d2e7" fill-rule="evenodd"/>
<path d="M93.5 197.6 L95.9 197.6 L95.5 198.6 L93.9 198.6Z" fill="#e6e7e8" fill-rule="evenodd"/>
<path d="M134.8 116.2 L134.4 120.2 L135.0 121.8 L137.2 122.5 L140.4 122.0 L142.0 120.2 L141.8 119.5 L144.4 117.1 L144.8 115.9 L146.8 116.2 L148.0 115.4 L149.2 114.9 L150.8 116.6 L152.3 118.1 L154.3 119.0 L154.6 120.9 L155.5 119.5 L156.6 119.0 L154.7 117.3 L152.7 115.7 L151.8 113.9 L153.0 113.6 L153.5 114.2 L154.7 115.7 L157.1 117.1 L157.5 119.0 L158.7 120.4 L159.9 122.3 L160.7 120.9 L160.1 118.7 L161.1 118.3 L162.7 118.3 L163.1 120.4 L163.9 122.0 L166.3 122.3 L167.9 122.7 L170.6 122.1 L170.6 123.6 L170.2 125.4 L169.4 126.9 L167.9 127.2 L167.9 128.1 L168.6 129.8 L169.3 130.0 L169.8 128.5 L169.8 129.8 L171.8 132.8 L173.0 135.3 L174.6 138.2 L176.0 140.8 L176.6 142.5 L177.8 142.4 L180.6 141.5 L183.4 139.8 L185.7 138.6 L188.0 137.4 L189.6 134.5 L188.5 133.5 L186.9 132.8 L186.8 131.3 L185.3 133.0 L183.0 133.0 L183.0 131.5 L182.3 131.9 L181.8 130.9 L180.6 129.4 L180.2 128.1 L181.4 127.9 L182.6 129.8 L184.9 131.0 L186.9 130.7 L187.6 131.9 L190.9 132.2 L194.9 132.1 L195.7 133.4 L196.5 133.8 L197.7 135.7 L199.7 135.6 L199.9 137.4 L200.5 139.8 L201.7 143.1 L202.8 145.5 L203.6 146.3 L204.2 145.5 L205.1 144.5 L205.8 142.3 L205.8 140.3 L207.5 139.3 L209.6 137.0 L211.2 135.5 L212.4 135.1 L214.0 134.6 L215.2 135.7 L217.0 138.2 L217.0 139.8 L219.1 139.2 L219.8 140.7 L220.3 143.1 L220.2 145.5 L220.2 146.3 L221.8 147.9 L222.3 150.3 L224.3 151.6 L224.9 151.5 L224.2 149.5 L223.1 147.8 L221.9 146.7 L221.0 145.3 L221.5 143.1 L222.2 142.0 L223.5 143.1 L224.3 144.3 L225.5 145.8 L226.9 144.5 L228.8 143.3 L228.8 141.9 L227.9 139.8 L226.3 137.8 L226.3 136.6 L227.9 135.3 L229.5 135.5 L229.9 136.3 L232.3 134.6 L235.1 133.6 L237.0 131.9 L238.6 129.4 L239.0 128.1 L238.2 126.3 L236.9 123.6 L239.4 121.8 L236.6 121.5 L235.7 120.0 L238.6 120.0 L238.6 118.3 L240.9 119.0 L241.4 120.9 L242.4 123.6 L243.4 124.1 L244.8 123.2 L244.8 121.8 L243.4 119.5 L245.2 117.6 L245.9 116.8 L247.8 116.4 L249.8 114.7 L252.2 112.2 L253.7 109.1 L253.7 106.0 L251.4 104.9 L249.6 104.1 L252.5 101.5 L255.7 98.9 L260.5 98.6 L263.7 99.2 L265.7 98.0 L269.2 96.0 L271.9 95.0 L269.2 97.4 L266.6 100.6 L265.8 103.8 L266.6 108.1 L267.7 106.5 L269.2 104.9 L271.2 102.4 L271.9 100.4 L273.2 98.0 L277.6 98.0 L280.4 95.9 L284.8 95.0 L284.8 92.5 L287.1 91.2 L290.7 92.7 L293.1 90.5 L289.1 88.5 L285.2 86.5 L282.0 85.0 L277.6 85.0 L277.2 86.5 L270.0 85.6 L263.7 83.6 L261.3 82.1 L254.1 80.9 L252.9 82.9 L247.8 82.9 L244.6 83.6 L243.0 79.9 L237.4 80.6 L232.3 79.6 L229.1 79.1 L231.9 75.9 L224.7 73.1 L219.9 75.9 L211.2 77.5 L206.0 79.9 L206.4 82.1 L203.6 82.1 L200.9 80.6 L197.3 80.6 L195.1 83.6 L196.9 87.2 L199.7 89.2 L196.5 87.4 L192.9 86.0 L190.1 85.3 L188.9 87.3 L184.9 87.4 L179.4 89.2 L177.0 87.2 L177.0 90.1 L174.2 89.9 L171.4 92.5 L170.6 90.1 L174.6 89.2 L173.8 87.8 L168.2 85.8 L165.1 84.3 L162.3 83.5 L158.7 85.0 L154.7 87.2 L152.3 90.5 L150.0 93.8 L146.0 95.6 L146.0 99.2 L148.0 100.4 L150.4 98.9 L150.9 99.8 L151.9 102.7 L153.3 103.2 L155.1 102.1 L155.1 100.6 L157.1 98.0 L155.8 95.6 L159.1 92.5 L161.5 90.8 L162.1 91.8 L159.1 95.0 L158.9 97.1 L160.3 98.2 L163.5 97.4 L165.9 98.0 L164.3 98.6 L160.7 99.0 L161.3 101.0 L159.5 100.7 L158.7 102.7 L157.9 104.3 L153.4 104.9 L150.8 104.9 L150.0 104.0 L150.6 101.0 L148.5 101.5 L148.5 103.8 L149.0 104.9 L147.6 105.4 L145.7 106.0 L144.8 107.7 L143.4 108.1 L143.2 109.1 L142.0 109.7 L140.8 109.5 L140.8 110.5 L138.3 110.7 L140.0 111.9 L141.0 113.2 L140.8 115.7 L138.8 115.7Z M164.3 117.9 L164.7 115.7 L166.3 113.2 L168.2 113.2 L168.6 114.7 L170.2 114.2 L171.4 113.9 L172.4 112.1 L173.0 112.7 L171.8 114.5 L173.7 115.9 L175.1 117.1 L175.0 117.8 L172.2 118.1 L169.8 117.1 L168.2 117.1 L166.9 117.9 L165.1 117.9Z M179.8 113.7 L181.4 112.5 L184.2 112.4 L184.2 114.2 L182.6 114.7 L183.8 116.6 L183.9 118.1 L184.9 119.0 L184.6 121.8 L182.6 122.1 L181.0 121.3 L181.4 118.7 L179.8 116.2Z" fill="#e6e7e8" fill-rule="evenodd"/>
<path d="M164.3 98.6 L164.3 97.4 L167.1 95.0 L165.5 92.5 L165.9 88.5 L164.7 86.5 L166.7 85.3 L168.2 85.8 L173.8 87.8 L174.6 89.2 L170.6 90.1 L171.4 92.5 L174.2 89.9 L177.0 90.1 L177.0 87.2 L179.4 89.2 L184.9 87.4 L188.9 87.3 L190.1 85.3 L192.9 86.0 L196.5 87.4 L199.7 89.2 L196.9 87.2 L195.1 83.6 L197.3 80.6 L200.9 80.6 L203.6 82.1 L206.4 82.1 L206.0 79.9 L211.2 77.5 L219.9 75.9 L224.7 73.1 L231.9 75.9 L229.1 79.1 L232.3 79.6 L237.4 80.6 L243.0 79.9 L244.6 83.6 L247.8 82.9 L252.9 82.9 L254.1 80.9 L261.3 82.1 L263.7 83.6 L270.0 85.6 L277.2 86.5 L277.6 85.0 L282.0 85.0 L285.2 86.5 L289.1 88.5 L293.1 90.5 L290.7 92.7 L287.1 91.2 L284.8 92.5 L284.8 95.0 L280.4 95.9 L277.6 98.0 L273.2 98.0 L271.9 100.4 L271.2 102.4 L269.2 104.9 L267.7 106.5 L266.6 108.1 L265.8 103.8 L266.6 100.6 L269.2 97.4 L271.9 95.0 L269.2 96.0 L265.7 98.0 L263.7 99.2 L260.5 98.6 L255.7 98.9 L252.5 101.5 L249.6 104.1 L251.4 104.9 L253.7 106.0 L253.7 109.1 L252.2 112.2 L249.8 114.7 L247.8 116.4 L245.9 116.8 L246.2 114.2 L249.4 110.8 L245.8 111.2 L243.4 109.1 L242.2 106.0 L237.8 105.6 L236.6 109.1 L234.7 109.4 L232.7 108.9 L227.9 109.7 L223.1 108.6 L219.9 109.1 L219.9 107.0 L215.2 108.3 L211.6 110.0 L209.6 109.1 L205.6 108.1 L202.8 104.9 L198.5 104.7 L196.9 103.5 L190.5 104.9 L190.9 108.1 L185.7 108.4 L182.6 107.6 L180.6 109.1 L179.0 110.7 L181.0 112.7 L179.8 113.7 L179.8 116.2 L180.6 117.3 L179.0 117.3 L176.6 116.5 L173.8 115.8 L171.8 114.5 L173.0 112.7 L172.4 112.1 L173.8 111.2 L173.8 109.6 L172.2 109.1 L170.2 108.7 L169.0 106.7 L167.3 106.8 L167.9 105.4 L166.5 103.8 L166.3 102.7 L164.3 102.4 L164.0 101.0Z" fill="#eef6fa" fill-rule="evenodd"/>
<path d="M183.0 83.6 L184.2 80.6 L186.5 77.5 L191.3 75.4 L196.5 74.2 L194.5 76.7 L189.7 78.3 L186.9 81.4 L187.3 84.0 L184.6 83.9Z M218.4 70.8 L221.5 67.2 L225.5 69.9 L221.5 72.0Z M251.0 76.7 L254.9 75.9 L261.3 77.0 L257.3 78.3 L252.5 78.0Z M284.0 83.6 L286.7 83.2 L285.2 83.9Z M254.9 113.2 L256.1 112.7 L255.7 109.7 L256.9 110.2 L256.0 107.0 L255.7 104.6 L254.9 105.4 L254.9 109.1Z M180.2 68.5 L186.5 67.2 L191.3 67.2 L188.1 69.0 L181.8 69.4Z M157.8 104.3 L159.9 103.8 L159.9 104.4 L157.8 104.6Z" fill="#eef6fa" fill-rule="evenodd"/>
<path d="M150.8 69.9 L153.9 69.0 L157.9 68.6 L163.5 69.0 L159.5 71.7 L156.3 74.2 L153.9 74.2 L151.5 71.7Z" fill="#e6e7e8" fill-rule="evenodd"/>
<path d="M227.9 135.3 L229.5 135.5 L229.9 136.3 L232.3 134.6 L235.1 133.6 L237.0 131.9 L238.6 129.4 L239.0 128.1 L238.2 126.3 L236.9 123.6 L239.4 121.8 L236.6 121.5 L235.7 120.0 L238.6 120.0 L238.6 118.3 L240.9 119.0 L242.2 117.3 L243.8 117.1 L245.9 116.8 L246.2 114.2 L249.4 110.8 L245.8 111.2 L243.4 109.1 L242.2 106.0 L237.8 105.6 L236.6 109.1 L234.7 109.4 L234.3 111.4 L237.0 112.2 L235.4 112.9 L231.1 114.2 L230.7 115.7 L225.5 117.4 L221.5 116.5 L218.4 116.4 L214.4 114.0 L214.0 111.7 L211.6 110.0 L210.0 112.2 L207.6 112.0 L207.6 113.9 L205.6 114.2 L205.6 117.1 L202.4 118.5 L200.6 119.5 L201.7 121.8 L204.0 123.2 L204.8 125.9 L206.8 127.8 L210.4 129.8 L212.6 129.8 L215.2 130.0 L219.1 129.5 L220.5 131.7 L219.7 133.2 L221.0 134.9 L222.7 135.6 L223.3 134.6 L225.7 133.8 L226.9 134.9Z" fill="#a2c8e1" fill-rule="evenodd"/>
<path d="M228.5 137.1 L229.9 136.6 L230.3 137.0 L229.1 138.0Z" fill="#a2c8e1" fill-rule="evenodd"/>
<path d="M196.5 133.8 L197.7 135.7 L199.7 135.6 L199.9 137.4 L200.5 139.8 L201.7 143.1 L202.8 145.5 L203.6 146.3 L204.2 145.5 L205.1 144.5 L205.8 142.3 L205.8 140.3 L207.5 139.3 L209.6 137.0 L211.2 135.5 L212.4 135.1 L212.1 132.4 L213.2 131.5 L215.6 132.4 L216.2 134.0 L217.2 132.4 L219.1 130.1 L218.4 128.7 L215.2 130.0 L212.8 130.7 L212.1 130.0 L212.0 131.1 L208.8 130.3 L206.4 129.2 L205.9 127.8 L204.8 125.9 L204.0 123.2 L201.7 121.8 L200.9 123.9 L201.9 126.0 L201.3 127.2 L200.1 128.5 L198.1 129.8 L197.3 130.7 L198.5 132.4Z" fill="#b9d6ea" fill-rule="evenodd"/>
<path d="M169.7 129.6 L171.8 132.8 L173.0 135.3 L174.6 138.2 L176.0 139.5 L176.4 138.7 L178.6 138.9 L179.8 139.0 L183.4 137.4 L185.7 136.6 L186.1 134.5 L183.8 134.0 L183.0 132.8 L182.3 132.4 L181.8 130.9 L180.6 129.4 L179.4 128.9 L177.4 128.8 L175.4 127.0 L173.0 126.1 L171.4 126.7 L172.2 127.6 L170.6 128.7Z" fill="#9ac3df" fill-rule="evenodd"/>
<path d="M140.8 115.7 L144.4 116.6 L144.8 115.9 L146.8 116.2 L148.0 115.4 L147.6 114.2 L147.4 112.8 L146.8 112.9 L148.0 111.6 L148.5 110.2 L146.9 109.7 L145.3 109.1 L144.0 108.1 L143.4 108.1 L143.2 109.1 L142.0 109.7 L140.8 109.5 L140.8 110.5 L138.3 110.7 L140.0 111.9 L141.0 113.2Z" fill="#b6d4e8" fill-rule="evenodd"/>
<path d="M146.9 109.7 L148.5 110.2 L148.0 111.6 L150.0 111.7 L152.3 111.7 L153.0 110.5 L151.7 108.9 L153.9 108.1 L153.4 104.9 L150.8 104.9 L150.0 104.0 L148.8 103.9 L149.0 104.9 L147.6 105.4 L147.6 107.0 L146.8 108.1Z" fill="#a6cbe3" fill-rule="evenodd"/>
<path d="M137.6 109.0 L139.2 108.8 L143.1 107.9 L143.4 106.3 L142.2 106.0 L142.0 104.9 L140.8 103.8 L140.4 102.7 L140.6 100.8 L138.8 100.7 L139.6 99.7 L138.0 99.7 L137.1 101.5 L137.6 102.7 L138.2 104.0 L139.6 104.9 L139.5 105.5 L138.4 105.8 L138.7 106.7 L137.9 107.3 L139.5 107.7Z" fill="#9ac3df" fill-rule="evenodd"/>
<path d="M134.1 107.3 L137.0 106.8 L137.2 105.4 L137.6 104.3 L137.1 103.6 L135.6 103.6 L134.1 104.7 L134.4 106.0Z" fill="#e6e7e8" fill-rule="evenodd"/>
<path d="M148.5 120.0 L149.7 119.8 L149.7 118.1 L148.6 118.3Z M148.8 117.6 L149.6 117.6 L149.5 116.2Z M151.9 120.9 L154.3 120.7 L154.1 122.1 L152.1 121.3Z M160.7 123.4 L162.8 123.4 L162.7 123.7 L160.8 123.5Z M167.7 123.8 L169.4 123.1 L168.9 124.0Z" fill="#e6e7e8" fill-rule="evenodd"/>
<path d="M246.2 124.5 L247.4 123.2 L250.2 122.3 L251.0 121.5 L252.5 120.9 L253.3 119.0 L254.5 117.8 L254.9 119.5 L254.1 121.3 L253.9 123.2 L252.5 123.6 L251.0 124.0 L249.8 125.0 L247.8 124.3Z M253.3 117.1 L254.5 115.9 L254.8 113.8 L257.3 115.2 L257.7 116.0 L255.7 117.1 L254.1 116.7Z M245.4 125.0 L246.6 125.0 L246.6 126.9 L245.6 126.9 L245.2 125.7Z M247.4 125.4 L249.0 124.5 L249.0 125.0 L247.8 125.6Z M237.6 134.0 L238.7 132.2 L238.9 133.2 L238.1 134.9Z M205.5 145.1 L206.6 145.9 L207.1 147.1 L206.0 147.9 L205.5 146.7Z M237.7 137.8 L239.2 137.9 L239.0 139.4 L238.6 141.1 L240.6 142.3 L240.2 142.7 L238.2 141.7 L237.7 141.1 L237.4 139.8Z M239.0 147.1 L240.2 145.8 L241.8 144.9 L242.6 146.7 L241.8 147.9 L240.6 147.5Z M239.0 143.5 L240.6 143.7 L241.4 143.9 L241.4 144.7 L239.8 145.1 L239.0 144.3Z M235.3 145.9 L237.0 143.7 L237.3 143.9 L235.7 145.9Z M217.8 148.3 L219.5 148.6 L221.9 151.0 L224.3 153.3 L226.3 155.1 L226.1 157.3 L225.1 157.3 L222.7 155.1 L220.7 152.7 L218.7 150.3Z M225.7 158.1 L228.3 158.1 L230.3 157.9 L233.1 158.9 L232.9 159.6 L229.5 159.2 L226.7 158.6Z M228.7 151.5 L230.5 151.4 L231.9 150.2 L233.9 148.7 L235.1 147.1 L236.6 148.6 L235.7 150.3 L235.8 151.9 L235.4 153.3 L234.5 155.7 L233.1 155.9 L230.9 155.3 L229.5 153.9 L228.7 152.7Z M237.3 152.1 L238.2 151.8 L241.3 151.4 L239.8 152.4 L237.8 152.5 L238.6 153.4 L240.1 153.4 L239.0 154.3 L239.7 155.9 L239.3 156.7 L238.2 155.1 L237.8 157.1 L237.0 157.1 L237.0 155.3 L236.5 154.9 L237.2 153.3Z M233.9 159.4 L236.6 159.3 L239.8 159.3 L241.4 159.3 L243.0 159.4 L240.6 160.9 L237.4 160.3 L234.3 159.9Z M246.2 153.3 L248.6 153.3 L249.8 155.3 L251.8 154.0 L254.1 154.8 L257.3 156.1 L259.5 157.5 L258.5 158.1 L259.7 159.3 L261.7 160.9 L258.9 160.3 L256.5 158.9 L255.6 160.1 L254.1 160.0 L252.2 159.3 L251.8 157.1 L249.4 156.1 L247.8 155.9 L247.0 154.9 L248.4 154.5Z M243.4 151.3 L244.2 151.5 L243.8 153.3 L243.4 152.3Z M243.8 155.1 L245.8 155.1 L245.8 155.7 L243.8 155.5Z M260.5 157.1 L262.9 156.1 L262.9 157.1 L260.5 157.7Z M279.3 181.3 L280.8 182.7 L282.0 184.1 L283.8 184.3 L282.8 185.7 L282.6 186.7 L281.3 187.8 L281.0 186.4 L280.2 185.7 L280.9 184.1 L279.6 181.8Z M279.3 186.9 L280.5 187.8 L279.6 189.5 L278.2 190.5 L277.8 192.2 L276.0 192.8 L274.4 192.2 L275.6 190.5 L277.6 189.1 L278.8 187.3Z M272.4 168.9 L273.2 169.0 L274.8 170.8 L274.0 170.7Z M283.0 166.8 L284.0 166.8 L283.9 167.4 L283.0 167.4Z M268.5 159.1 L270.0 159.9 L270.4 160.7 L268.9 159.9Z" fill="#e6e7e8" fill-rule="evenodd"/>
<path d="M232.3 170.5 L232.7 173.9 L233.5 177.8 L233.5 181.1 L235.8 181.8 L240.2 180.8 L244.6 178.8 L246.6 178.7 L248.6 179.8 L249.8 181.6 L251.4 180.0 L251.8 182.2 L253.2 183.6 L254.5 184.8 L256.5 184.8 L258.4 185.5 L259.7 184.3 L261.3 183.9 L262.1 180.9 L263.7 178.2 L264.1 175.2 L263.3 173.1 L261.7 170.9 L260.1 168.9 L258.1 167.9 L257.6 164.8 L256.1 164.2 L255.3 161.4 L254.5 163.5 L254.1 166.4 L252.9 166.8 L251.4 165.6 L249.8 164.8 L250.8 162.5 L249.4 162.3 L247.4 161.9 L245.4 163.1 L245.0 164.8 L243.8 164.6 L242.2 163.9 L241.0 165.8 L239.3 166.8 L238.6 168.4 L235.1 169.4 L233.1 170.4Z" fill="#b2d1e7" fill-rule="evenodd"/>
<path d="M257.1 187.1 L259.7 187.2 L259.9 188.6 L258.8 189.8 L257.7 189.1Z" fill="#b2d1e7" fill-rule="evenodd"/>
<path d="M137.3 122.9 L140.4 123.4 L144.4 121.9 L149.8 121.5 L150.8 121.9 L150.1 124.3 L151.1 125.2 L154.2 126.0 L157.1 127.8 L158.1 126.0 L160.3 125.7 L161.9 126.6 L165.1 127.2 L167.9 127.1 L167.9 128.1 L168.8 130.2 L170.2 133.2 L171.4 135.7 L171.8 137.6 L173.4 140.4 L176.4 143.1 L176.4 143.5 L177.8 144.3 L180.8 143.7 L182.7 143.1 L182.6 144.4 L179.8 149.1 L177.0 151.5 L175.0 154.1 L173.3 156.5 L172.9 157.9 L173.4 159.1 L174.2 161.1 L174.4 164.8 L171.4 167.0 L169.8 168.9 L170.2 172.2 L168.1 173.7 L168.1 175.6 L166.7 177.4 L164.3 180.0 L162.3 180.9 L159.5 181.1 L157.9 181.6 L156.6 181.1 L156.3 179.1 L155.1 176.5 L153.9 174.3 L153.5 170.9 L151.5 167.2 L151.4 165.2 L153.0 161.5 L152.6 159.5 L151.7 157.5 L151.4 156.3 L149.2 153.3 L149.7 151.1 L149.7 149.7 L148.8 149.0 L146.8 149.3 L145.6 147.7 L143.0 147.9 L140.4 148.9 L138.4 148.6 L136.0 149.2 L134.6 147.7 L132.9 147.1 L131.4 145.5 L130.1 143.9 L128.6 142.7 L128.1 140.9 L128.9 139.8 L129.0 137.4 L128.5 135.7 L129.3 133.6 L130.5 131.3 L131.7 130.0 L134.1 128.5 L134.3 126.7 L136.6 124.5Z" fill="#e6e7e8" fill-rule="evenodd"/>
<path d="M181.2 162.3 L182.0 165.2 L181.0 167.2 L180.0 170.9 L179.4 173.1 L178.0 173.5 L176.6 171.8 L176.4 170.1 L177.4 168.4 L177.0 166.4 L178.6 165.3 L180.2 163.5Z" fill="#e6e7e8" fill-rule="evenodd"/>
<path d="M84.7 143.1 L84.3 145.5 L86.3 147.1 L88.3 147.9 L88.7 151.8 M94.3 145.9 L93.5 147.9 L93.9 148.7 M96.7 147.9 L96.3 149.9 L96.7 151.1 M99.1 148.1 L98.7 150.9 M79.2 151.5 L82.0 152.7 M78.1 155.4 L79.6 156.5 L82.0 154.7 L82.0 152.7 L83.9 154.5 L86.3 156.1 M85.9 161.5 L87.1 162.7 L87.1 165.2 L86.7 166.8 L86.1 167.5 M86.7 166.8 L87.9 168.4 L87.9 170.5 L88.7 171.4 L90.3 170.5 L92.3 170.7 L92.7 168.9 L95.7 168.9 M88.7 171.4 L87.5 173.9 L86.3 177.4 L86.3 180.9 L85.5 184.5 L85.0 189.3 L84.7 193.2 L83.9 196.3 L84.7 198.4 L87.5 198.9 M92.3 170.7 L95.9 173.1 L95.9 174.8 L97.9 175.0 L98.7 173.5 M96.3 177.5 L95.6 180.4 M68.7 141.1 L69.2 139.8 L70.0 139.8 L69.6 138.9 L71.1 138.4 L71.1 139.8 L71.1 141.2 L72.3 142.0 M71.1 138.4 L71.8 137.8 M71.1 141.2 L70.3 141.6 M72.4 142.3 L74.4 142.1 L75.8 140.7 M73.8 143.8 L75.4 144.0 M76.1 146.2 L76.3 145.1 M85.0 136.8 L84.9 138.2 M140.4 123.4 L140.8 125.9 L139.2 127.2 L135.1 129.2 L135.1 130.2 M131.7 130.1 L135.1 130.1 M135.1 130.2 L135.1 131.5 L132.5 131.5 L132.5 133.6 L131.7 134.0 L131.7 135.5 L128.5 135.5 M135.1 130.4 L138.2 132.4 L136.8 132.4 L137.6 139.4 L137.8 140.3 L132.9 140.3 L132.3 140.8 L130.5 139.4 L128.9 139.8 M138.2 132.4 L143.0 135.6 L144.4 136.7 L145.3 137.2 L145.3 139.4 L144.8 140.3 L142.2 140.7 L141.6 140.7 L140.4 141.3 L139.2 142.0 L138.6 142.9 L137.8 143.3 L137.6 144.4 L135.6 144.5 L135.2 143.9 L132.9 142.8 L132.3 140.8 M144.4 136.7 L148.0 135.9 L151.5 133.6 L150.0 132.8 L149.6 131.3 L150.0 130.7 L149.8 128.9 L149.6 127.9 L148.8 125.9 L148.0 124.7 L148.8 121.9 M149.6 127.9 L151.1 125.2 M161.9 126.6 L161.9 134.9 L161.9 136.6 L161.1 136.6 L161.1 137.0 L154.7 133.6 L153.9 134.0 L153.1 134.3 L151.5 133.6 M161.9 134.9 L171.3 134.9 M153.9 134.0 L154.6 136.1 L154.3 139.2 L152.7 141.1 L152.7 141.7 M144.9 143.3 L145.3 141.9 L147.6 142.3 L149.2 142.4 L151.1 142.0 L152.7 141.7 L153.3 142.7 M144.9 143.3 L144.2 145.5 L144.2 147.6 M153.3 142.7 L152.7 144.7 L151.5 145.9 L150.8 147.4 L149.6 147.6 L148.8 149.0 M161.1 137.0 L161.1 140.1 L159.9 141.5 L159.5 142.5 L160.2 143.9 M153.3 142.7 L154.3 144.7 L153.1 144.7 L154.3 146.7 L155.1 146.5 L157.1 145.5 L158.7 145.1 L160.2 143.9 L161.1 145.8 L163.9 145.0 L165.1 144.9 L166.7 145.0 L168.2 144.5 L168.2 142.9 L169.0 145.1 L168.2 146.3 L169.4 147.5 L170.6 149.0 M169.0 145.1 L169.8 143.1 L171.0 142.3 L171.0 141.2 L171.4 139.0 L172.6 138.2 M171.0 141.2 L173.8 141.1 L175.7 142.7 L176.4 143.1 M176.2 143.5 L176.0 144.7 L177.8 145.9 L180.2 146.3 L177.8 148.7 L175.4 149.4 L174.6 149.5 L173.0 149.9 L170.6 149.2 L169.0 149.4 M174.6 149.5 L174.6 152.7 L175.0 154.1 M169.0 153.5 L172.0 155.1 L173.2 156.5 M169.0 149.4 L169.8 151.5 L169.0 152.7 L169.0 153.5 M169.0 149.4 L166.7 149.8 L166.5 150.8 L165.6 152.3 L165.6 153.7 L166.3 153.5 L169.0 153.5 M154.3 146.7 L153.5 148.7 L154.7 151.3 L155.1 149.9 L156.8 149.9 L156.8 149.1 L159.9 149.5 L161.9 148.7 L163.9 148.7 L165.9 149.1 L166.7 149.8 M149.8 150.9 L152.5 151.0 L154.7 151.3 M161.1 145.8 L163.9 148.7 M150.9 155.8 L151.3 154.7 L153.5 154.5 L153.1 153.1 L153.5 151.6 L152.5 151.0 M149.6 151.9 L151.0 151.9 L151.0 151.0 M156.8 149.9 L156.2 153.1 L154.9 154.7 L154.7 155.9 L152.3 156.4 L151.7 157.3 M151.7 157.3 L155.1 157.4 L155.5 158.7 L157.5 158.9 L159.3 158.7 L159.3 161.5 L161.1 161.5 L161.1 163.0 L159.5 163.1 M161.1 161.5 L162.3 162.1 L163.5 162.3 L165.1 163.5 L165.7 162.5 L164.6 162.2 L164.7 160.3 L166.5 159.3 M165.6 153.7 L165.1 154.9 L165.3 156.3 L165.5 157.9 L166.5 159.3 L168.2 160.2 L169.4 160.3 L169.4 161.9 L171.8 162.1 L174.1 161.1 M165.1 154.9 L166.5 154.6 L166.3 153.5 M165.3 156.3 L166.5 155.3 L166.5 154.6 M159.5 163.1 L159.5 165.7 L160.6 166.9 M162.0 167.0 L163.5 167.2 L165.0 165.5 L166.2 165.2 L166.0 164.6 L168.4 163.9 L168.2 160.2 M168.4 163.9 L169.4 164.3 L170.5 165.6 L170.0 166.4 L169.4 161.9 M151.4 166.6 L153.1 166.7 L156.7 166.7 L158.7 167.2 L160.6 166.9 L162.0 167.0 M158.7 167.2 L158.7 170.5 L157.9 170.5 L157.9 172.9 L157.9 176.0 L155.1 176.1 M157.9 172.9 L160.1 173.5 L162.3 173.6 L163.5 171.9 L165.4 170.7 M162.0 167.0 L163.9 169.3 L165.4 170.7 M166.2 165.2 L168.1 166.1 L168.2 168.4 L167.8 169.9 L166.9 170.9 L165.4 170.7 M166.9 170.9 L167.5 172.6 L167.5 174.6 L168.2 174.7 M163.9 176.9 L165.1 176.3 L165.3 177.4 L164.3 177.9 L163.9 176.9 M128.7 142.8 L131.1 142.6 L132.9 142.8 M128.6 141.8 L130.9 141.8 M131.4 145.5 L133.7 144.7 L133.8 145.9 L132.9 147.1 M133.8 145.9 L135.2 146.6 L136.0 149.2 M135.6 144.5 L135.2 146.6 M139.8 148.7 L139.9 145.1 L139.7 143.9 M143.0 147.8 L142.4 145.9 L142.0 143.9 M143.4 147.8 L143.2 145.5 L142.7 143.9 M137.6 144.4 L139.7 143.9 L142.0 143.9 L142.7 143.9 L143.9 142.9 L144.9 143.3 M143.9 142.9 L142.2 140.7 M130.1 143.9 L131.1 143.3 L131.1 142.6 M135.0 117.2 L136.8 117.5 L136.4 119.5 L136.1 121.6 M147.6 113.3 L150.4 112.4 L152.9 112.7 L152.9 113.6 M148.0 111.6 L149.6 111.7 L150.4 112.4 M153.0 110.5 L155.5 110.4 L155.5 111.2 L154.9 112.3 L152.9 112.7 M153.9 108.1 L157.0 109.7 L155.5 110.4 M151.7 108.9 L153.8 110.4 M160.7 104.9 L160.8 106.4 L161.1 108.5 L159.9 110.1 L157.0 109.7 M157.8 104.4 L160.7 104.9 M155.5 111.2 L157.9 110.9 L159.7 110.8 L159.9 110.1 M159.7 110.8 L158.9 113.0 L158.1 113.1 L157.0 113.3 L154.9 112.3 M159.7 110.8 L161.8 111.5 L163.2 110.9 L164.4 113.7 L165.6 113.9 M163.2 110.9 L165.1 111.2 L165.9 112.8 M160.1 115.0 L162.3 115.5 L163.6 115.1 L164.7 115.5 M158.9 113.0 L159.0 114.4 L160.1 115.0 L159.8 116.8 L160.2 117.8 M160.2 117.8 L162.9 117.4 L164.3 117.1 M162.9 117.4 L162.7 118.3 M157.9 119.3 L158.7 118.2 L160.2 117.8 M157.4 117.2 L158.3 116.9 L158.7 118.2 M158.3 116.9 L159.8 116.8 M152.9 113.6 L154.2 113.7 L155.1 112.8 M154.6 114.0 L157.1 114.2 L157.4 114.3 L157.3 115.7 L156.7 116.6 M157.1 114.2 L157.0 113.3 M157.3 115.7 L158.3 116.9 M160.8 107.5 L164.1 107.6 L166.3 107.8 L167.3 106.8 M160.7 104.9 L162.5 103.9 L163.2 103.0 L164.3 102.4 M158.7 102.6 L161.9 102.3 L163.2 103.0 M161.3 100.5 L163.8 101.0 M150.9 99.2 L151.9 96.8 L151.7 93.8 L153.5 90.5 L155.1 87.8 L157.9 86.5 M161.3 90.8 L160.8 88.5 L158.4 86.5 M158.4 86.5 L162.4 86.5 L162.7 85.0 L164.3 85.0 L165.1 85.8 L164.7 86.5 M148.8 103.9 L149.9 104.0 M144.7 107.7 L146.8 108.1 M146.7 109.7 L147.1 108.8 L146.8 108.1 M170.6 122.7 L172.2 122.0 L175.6 121.6 L177.6 121.6 L177.0 119.6 L177.6 119.3 L176.6 118.0 L175.0 117.6 M176.6 118.0 L177.8 117.8 L179.0 117.3 M177.6 119.3 L179.0 120.0 L180.2 119.5 L180.9 120.5 M177.8 117.8 L177.8 119.3 M175.6 121.6 L174.8 123.8 L172.9 125.1 L171.3 126.0 L170.4 125.7 M172.9 125.1 L173.0 126.1 M170.6 124.0 L171.0 124.5 L170.5 125.1 M177.6 121.6 L178.6 122.9 L178.2 124.5 L180.0 127.2 L180.6 128.1 M170.2 125.4 L170.2 126.7 L169.8 128.5 M169.3 126.9 L169.8 128.5 M183.4 137.4 L184.2 139.3 M186.1 134.5 L186.5 133.0 L186.8 131.5 M183.0 132.8 L183.8 134.0 L186.1 134.5 M179.4 128.9 L179.9 128.1 L180.2 128.1 M184.9 121.5 L186.5 120.9 L188.1 121.2 L190.7 122.2 L190.4 124.5 L190.4 126.7 L191.2 126.8 L190.4 128.2 L192.1 130.5 L191.0 132.2 M190.4 128.2 L194.7 128.1 L197.1 126.4 L197.7 124.6 L198.9 122.4 L201.6 121.6 M190.7 122.2 L193.3 122.4 L194.9 121.4 L196.1 121.8 L198.5 120.5 L198.9 122.0 L201.6 121.6 M184.2 117.1 L186.5 117.8 L186.5 114.2 L188.5 113.7 L190.5 114.9 L194.5 116.2 L196.1 118.1 L197.7 117.1 L198.5 116.6 L200.5 116.2 L201.4 116.2 L205.6 116.9 M186.5 117.8 L188.1 116.6 L189.7 117.9 L191.3 118.1 L194.9 121.4 M198.5 116.6 L197.7 118.8 L200.6 119.5 M196.1 118.1 L196.9 118.8 L196.1 121.8 M205.9 127.8 L207.2 127.9 L208.8 129.1 L210.4 129.8 L212.1 130.0 M212.8 130.7 L215.2 130.8 M215.4 135.7 L215.6 134.9 L215.6 133.6 M221.6 136.3 L219.8 137.8 L220.6 139.8 L220.1 141.5 L220.9 143.5 L220.6 144.5 M221.6 136.3 L222.5 135.5 M221.6 136.3 L221.9 137.0 L222.5 138.6 L223.3 138.2 L224.7 138.0 L225.3 139.4 L226.0 140.8 L225.7 141.2 L223.5 141.3 L223.5 143.1 M223.3 134.6 L224.7 136.3 L225.5 137.6 L227.1 139.6 L227.6 141.1 L227.5 142.9 L226.3 143.9 L225.1 144.4 M225.7 141.2 L227.6 141.1 M221.6 147.6 L223.0 148.1 L223.2 147.8 M242.2 120.9 L244.0 120.3 M229.2 151.1 L231.1 151.7 L233.1 151.5 L234.1 149.3 L235.5 149.4 M254.1 154.8 L254.1 160.0 M240.9 119.0 L242.2 117.3 L243.8 117.1 L245.9 116.8" fill="none" stroke="#f6fafc" stroke-opacity=".85" stroke-width=".55" stroke-linejoin="round"/>
</svg><!--MAPEND-->
<div class="abs zb" style="left:256.9px;top:207.7px">+</div><div class="abs zb" style="left:272.3px;top:207.7px">&minus;</div>
</div>
<div class="box" style="left:641.4px;top:442.700px;width:302.4px;height:300px;background:linear-gradient(#7adddd,#39cccc);border-radius:2px 2px 0 0">
<svg class="abs" style="left:7px;top:9.4px" width="14.2" height="10.8" viewBox="0 0 13.400 10" preserveAspectRatio="none"><g fill="#fff"><rect x="0" y="0" width="3.800" height="2.700" rx=".4"/><rect x="4.800" y="0" width="3.800" height="2.700" rx=".4"/><rect x="9.600" y="0" width="3.800" height="2.700" rx=".4"/><rect x="0" y="3.650" width="3.800" height="2.700" rx=".4"/><rect x="4.800" y="3.650" width="3.800" height="2.700" rx=".4"/><rect x="9.600" y="3.650" width="3.800" height="2.700" rx=".4"/><rect x="0" y="7.300" width="3.800" height="2.700" rx=".4"/><rect x="4.800" y="7.300" width="3.800" height="2.700" rx=".4"/><rect x="9.600" y="7.300" width="3.800" height="2.700" rx=".4"/></g></svg>
<div class="t" style="left:24.600px;top:9.8px;font-size:12.2px;color:#fff">Sales Graph</div>
<div class="abs" style="left:250px;top:4.300px;width:44.600px;height:20.900px;background:#39cccc;border-radius:2px"></div>
<div class="abs" style="left:257.700px;top:13.700px;width:7.700px;height:2.200px;background:#fff;border-radius:.5px"></div>
<svg class="abs" style="left:280.200px;top:11.300px" width="6.800" height="6.800" viewBox="0 0 6.800 6.800"><path d="M.9 .9 L5.900 5.900 M5.900 .9 L.9 5.900" stroke="#fff" stroke-width="2" fill="none"/></svg>
</div>
</div>

</body>
</html>
